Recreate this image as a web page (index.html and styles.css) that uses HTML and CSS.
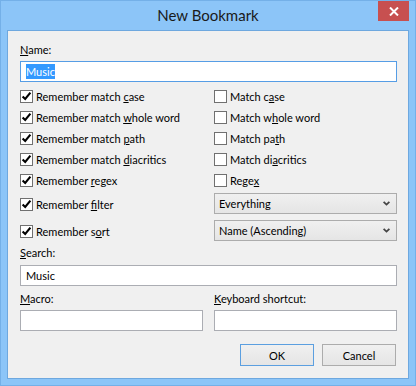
FILE: index.html
```html
<!DOCTYPE html>
<html lang="en">
<head>
    <meta charset="UTF-8">
    <title>New Bookmark</title>
    <link rel="stylesheet" href="styles.css">
</head>
<body>
    <div class="window">
        <div class="titlebar">
            <span class="title">New Bookmark</span>
            <button class="close" type="button" aria-label="Close">
                <svg width="10" height="9" viewBox="0 0 10 9">
                    <path d="M1 0.5 L9 8.5 M9 0.5 L1 8.5" stroke="#fff" stroke-width="2"/>
                </svg>
            </button>
        </div>

        <div class="client">
            <div class="label name-label"><u>N</u>ame:</div>
            <div class="input focused"><span class="selected">Music</span></div>

            <div class="options">
                <div class="check on"><i class="box"></i><span>Remember match <u>c</u>ase</span></div>
                <div class="check"><i class="box"></i><span>Match c<u>a</u>se</span></div>
                <div class="check on"><i class="box"></i><span>Remember match <u>w</u>hole word</span></div>
                <div class="check"><i class="box"></i><span>Match w<u>h</u>ole word</span></div>
                <div class="check on"><i class="box"></i><span>Remember match <u>p</u>ath</span></div>
                <div class="check"><i class="box"></i><span>Match pa<u>t</u>h</span></div>
                <div class="check on"><i class="box"></i><span>Remember match <u>d</u>iacritics</span></div>
                <div class="check"><i class="box"></i><span>Match di<u>a</u>critics</span></div>
                <div class="check on"><i class="box"></i><span>Remember <u>r</u>egex</span></div>
                <div class="check"><i class="box"></i><span>Rege<u>x</u></span></div>
            </div>

            <div class="pickers">
                <div class="check on shift"><i class="box"></i><span>Remember <u>f</u>ilter</span></div>
                <div class="select"><span>Everything</span><i class="chevron"></i></div>
                <div class="check on shift"><i class="box"></i><span>Remember s<u>o</u>rt</span></div>
                <div class="select"><span>Name (Ascending)</span><i class="chevron"></i></div>
            </div>

            <div class="label search-label"><u>S</u>earch:</div>
            <div class="input"><span>Music</span></div>

            <div class="pair">
                <div class="field">
                    <div class="label"><u>M</u>acro:</div>
                    <div class="input"></div>
                </div>
                <div class="field">
                    <div class="label"><u>K</u>eyboard shortcut:</div>
                    <div class="input"></div>
                </div>
            </div>

            <div class="buttons">
                <button class="btn default" type="button">OK</button>
                <button class="btn" type="button">Cancel</button>
            </div>
        </div>
    </div>
</body>
</html>
```

FILE: styles.css
```css
:root {
    --frame: #8cc5f8;
    --frame-edge: #74b0e8;
    --client: #f0f0f0;
    --field-border: #abadb3;
    --focus: #569de5;
    --ui-font: 'Lato', 'Open Sans', sans-serif;
}

* {
    box-sizing: border-box;
    margin: 0;
    padding: 0;
}

body {
    font-family: var(--ui-font);
    font-size: 11px;
    line-height: 15px;
    color: #000;
    background: var(--frame);
}

.window {
    width: 416px;
    height: 386px;
    display: flex;
    flex-direction: column;
    background: var(--frame);
    border: 1px solid var(--frame-edge);
}

/* title bar */
.titlebar {
    height: 29px;
    display: grid;
    grid-template-columns: 1fr auto 1fr;
}

.title {
    grid-column: 2;
    align-self: center;
    font-size: 15px;
    line-height: 20px;
    color: #1a1a1a;
    margin-top: -1px;
}

.close {
    grid-column: 3;
    justify-self: end;
    width: 31px;
    height: 20px;
    margin-right: 6px;
    border: none;
    background: #c75050;
    display: flex;
    align-items: center;
    justify-content: center;
}

/* client area */
.client {
    flex: 1;
    margin: 0 6px 6px;
    border: 1px solid #6ea8df;
    background: var(--client);
    padding: 11px 11px 0 12px;
}

.label {
    height: 15px;
    margin-bottom: 4px;
}

.search-label {
    margin-top: 4px;
    margin-bottom: 5px;
}

.input {
    height: 21px;
    border: 1px solid var(--field-border);
    background: #fff;
    padding: 0 5px;
    display: flex;
    align-items: center;
}

.input.focused {
    border-color: var(--focus);
}

.selected {
    background: #3399ff;
    color: #fff;
}

/* check boxes */
.options,
.pickers {
    display: grid;
    grid-template-columns: 183px 183px;
    column-gap: 11px;
}

.options {
    margin-top: 4px;
    grid-auto-rows: 21px;
}

.pickers {
    margin-top: 2px;
    grid-auto-rows: 21px;
    row-gap: 6px;
}

.check {
    display: flex;
    align-items: center;
    gap: 3px;
}

.check.shift {
    padding-top: 2px;
}

.box {
    width: 13px;
    height: 13px;
    flex: none;
    border: 1px solid #707070;
    background: #fff;
}

.check.on .box {
    background: #fff url("data:image/svg+xml,%3Csvg xmlns='http://www.w3.org/2000/svg' width='11' height='11' viewBox='0 0 11 11'%3E%3Cpath d='M1.6 5.4 L4.2 8 L9.4 1.6' fill='none' stroke='%23000' stroke-width='2.1'/%3E%3C/svg%3E") center / 11px 11px no-repeat;
}

/* drop downs */
.select {
    height: 21px;
    border: 1px solid #acacac;
    background: linear-gradient(#f0f0f0, #e5e5e5);
    padding: 0 6px 0 4px;
    display: flex;
    align-items: center;
    justify-content: space-between;
}

.chevron {
    width: 7px;
    height: 5px;
    background: url("data:image/svg+xml,%3Csvg xmlns='http://www.w3.org/2000/svg' width='7' height='5' viewBox='0 0 7 5'%3E%3Cpath d='M0.6 0.8 L3.5 3.6 L6.4 0.8' fill='none' stroke='%23444' stroke-width='1.8'/%3E%3C/svg%3E") no-repeat;
}

/* macro + shortcut */
.pair {
    display: grid;
    grid-template-columns: 183px 183px;
    column-gap: 11px;
    margin-top: 5px;
}

/* buttons */
.buttons {
    display: flex;
    justify-content: flex-end;
    gap: 8px;
    margin-top: 13px;
    padding-right: 1px;
}

.btn {
    width: 74px;
    height: 22px;
    font-family: var(--ui-font);
    font-size: 11px;
    color: #000;
    border: 1px solid #acacac;
    background: linear-gradient(#f0f0f0, #e5e5e5);
}

.btn.default {
    border-color: #5b9fe0;
}
```
